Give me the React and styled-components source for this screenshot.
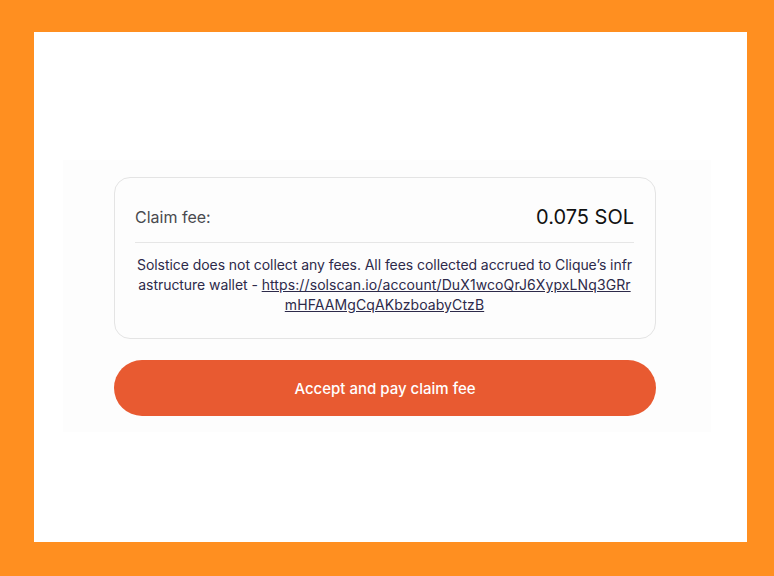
import React from "react";
import styled, { createGlobalStyle } from "styled-components";

const Global = createGlobalStyle`
  html, body { margin: 0; padding: 0; background: #FF8F20; }
  body { font-family: Inter, "Noto Sans", sans-serif; }
  * { box-sizing: border-box; }
`;

const Frame = styled.div`
  width: 774px;
  height: 576px;
  padding: 32px 27px 34px 34px;
  background: #FF8F20;
`;

const Sheet = styled.div`
  width: 100%;
  height: 100%;
  background: #ffffff;
  padding: 128px 36px 0 29px;
`;

const Panel = styled.div`
  background: #fdfdfd;
  padding: 17px 55px 16px 51px;
  display: flex;
  flex-direction: column;
  gap: 21px;
`;

const Card = styled.div`
  border: 1px solid #e4e4e4;
  border-radius: 16px;
  background: #fdfdfd;
  padding: 24px 21px 23px 20px;
`;

const Row = styled.div`
  display: flex;
  justify-content: space-between;
  align-items: center;
  height: 30px;
  margin-bottom: 10px;
`;

const Label = styled.span`
  font-size: 16px;
  color: #4a4a4f;
`;

const Value = styled.span`
  font-size: 20px;
  color: #111;
`;

const Divider = styled.div`
  height: 1px;
  background: #e6e6e6;
  margin-bottom: 12px;
`;

const Note = styled.p`
  margin: 0;
  font-size: 14px;
  letter-spacing: -0.06px;
  line-height: 20px;
  color: #2d2a4a;
  text-align: center;
  word-break: break-all;
`;

const Link = styled.a`
  color: #2d2a4a;
  letter-spacing: 0.1px;
  text-decoration: underline;
`;

const Button = styled.button`
  height: 56px;
  border: none;
  border-radius: 28px;
  background: #E85A31;
  color: #fff;
  font-family: Inter, "Noto Sans", sans-serif;
  font-size: 15px;
  font-weight: 500;
  cursor: pointer;
`;

export default function App() {
  const url = "https://solscan.io/account/DuX1wcoQrJ6XypxLNq3GRrmHFAAMgCqAKbzboabyCtzB";
  return (
    <>
      <Global />
      <Frame>
        <Sheet>
          <Panel>
            <Card>
              <Row>
                <Label>Claim fee:</Label>
                <Value>0.075 SOL</Value>
              </Row>
              <Divider />
              <Note>
                Solstice does not collect any fees. All fees collected accrued to Clique’s infrastructure wallet -{" "}
                <Link href={url}>{url}</Link>
              </Note>
            </Card>
            <Button>Accept and pay claim fee</Button>
          </Panel>
        </Sheet>
      </Frame>
    </>
  );
}
